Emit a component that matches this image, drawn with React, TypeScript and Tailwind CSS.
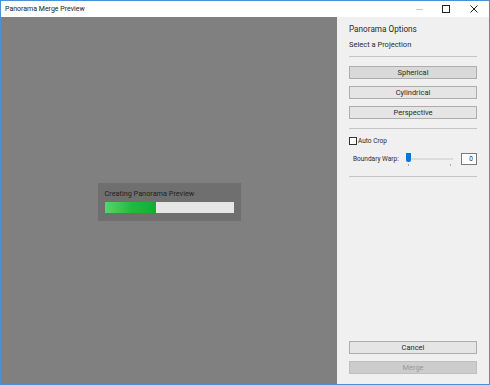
import * as React from "react"

const font = { fontFamily: 'Roboto, "Noto Sans", "Liberation Sans", sans-serif' }

function PanelButton({ label, active, disabled }: { label: string; active?: boolean; disabled?: boolean }) {
  const tone = disabled
    ? "bg-[#cccccc] border-[#bfbfbf] text-[#9a9a9a]"
    : active
    ? "bg-[#d9d9d9] border-[#adadad] text-[#2a2a2a]"
    : "bg-[#e5e5e5] border-[#adadad] text-[#2a2a2a]"
  return (
    <div className={`h-[13px] border flex items-center justify-center text-[7.5px] leading-none ${tone}`}>
      {label}
    </div>
  )
}

export default function App() {
  return (
    <div
      className="w-[490px] h-[385px] flex flex-col bg-white border border-[#4a8fd8] overflow-hidden"
      style={font}
    >
      {/* Title bar */}
      <div className="h-[16px] flex items-center shrink-0 bg-white">
        <span className="pl-[4px] pt-[1px] text-[7px] text-[#222] leading-none">Panorama Merge Preview</span>
        <div className="ml-auto flex items-center h-full">
          <svg width="26" height="16" viewBox="0 0 26 16">
            <line x1="9" y1="8.5" x2="16" y2="8.5" stroke="#c8c8c8" strokeWidth="1" />
          </svg>
          <svg width="26" height="16" viewBox="0 0 26 16">
            <rect x="9.5" y="4.5" width="7" height="7" fill="none" stroke="#222" strokeWidth="1" />
          </svg>
          <svg width="30" height="16" viewBox="0 0 30 16">
            <path d="M11.5 4.5 L18.5 11.5 M18.5 4.5 L11.5 11.5" stroke="#222" strokeWidth="1" />
          </svg>
        </div>
      </div>

      <div className="flex flex-1 min-h-0">
        {/* Preview area */}
        <div className="w-[336px] bg-[#808080] flex items-center justify-center">
          <div className="w-[143px] h-[38px] bg-[#6f6f6f] px-[7px] pt-[7px] mt-[2px]">
            <div className="text-[7.3px] text-[#222] leading-none">Creating Panorama Preview</div>
            <div className="mt-[5px] h-[11px] bg-[#e6e6e6] flex">
              <div className="w-[51px] h-full bg-gradient-to-r from-[#5ad36b] via-[#22bb40] to-[#0fae30]" />
            </div>
          </div>
        </div>

        {/* Options panel */}
        <div className="flex-1 bg-[#f0f0f0] flex flex-col px-[12px] pb-[10px] text-[#2a2a2a]">
          <div className="mt-[6px] text-[8.2px] leading-[12px]">Panorama Options</div>
          <div className="mt-[4px] text-[7.5px] leading-[12px]">Select a Projection</div>
          <div className="mt-[5px] h-px bg-[#c4c4c4]" />

          <div className="mt-[9px] flex flex-col gap-[7px]">
            <PanelButton label="Spherical" active />
            <PanelButton label="Cylindrical" />
            <PanelButton label="Perspective" />
          </div>

          <div className="mt-[9px] h-px bg-[#c4c4c4]" />

          <div className="mt-[8px] flex items-center gap-[1px]">
            <div className="w-[8px] h-[8px] border border-[#333] bg-white" />
            <span className="text-[6.5px] leading-none">Auto Crop</span>
          </div>

          <div className="mt-[8px] flex items-center h-[12px] pl-[4px]">
            <span className="text-[6.5px] leading-none w-[53px] whitespace-nowrap">Boundary Warp:</span>
            <div className="relative w-[50px] h-[12px]">
              <div className="absolute left-[3px] right-[3px] top-[5px] h-[2px] bg-[#dcdcdc]" />
              <div className="absolute left-[0px] top-[0px] w-[5px] h-[9px] bg-[#0a74d9] rounded-b-[2px]" />
              <div className="absolute left-[2px] top-[11px] w-px h-[2px] bg-[#aaa]" />
              <div className="absolute left-[44px] top-[11px] w-px h-[2px] bg-[#aaa]" />
            </div>
            <div className="ml-auto w-[16px] h-[12px] border border-[#7a7a7a] bg-white flex items-center justify-end pr-[3px] text-[6.5px] leading-none">
              0
            </div>
          </div>

          <div className="mt-[11px] h-px bg-[#c4c4c4]" />

          <div className="mt-auto flex flex-col gap-[7px]">
            <PanelButton label="Cancel" />
            <PanelButton label="Merge" disabled />
          </div>
        </div>
      </div>
    </div>
  )
}
